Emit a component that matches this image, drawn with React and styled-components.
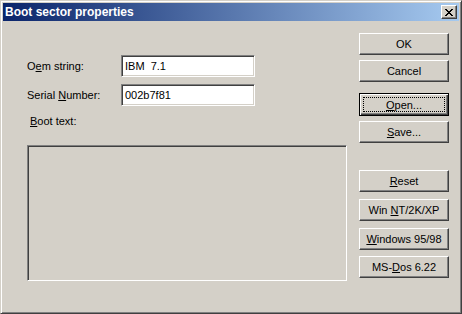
import React from "react";
import styled, { createGlobalStyle } from "styled-components";

const Global = createGlobalStyle`
  html, body { margin: 0; padding: 0; background: #D4D0C8; }
  body { font-family: "Liberation Sans", Arial, sans-serif; font-size: 11px; color: #000; }
  * { box-sizing: border-box; }
`;

const Window = styled.div`
  width: 462px;
  height: 314px;
  background: #D4D0C8;
  border: 1px solid;
  border-color: #D4D0C8 #404040 #404040 #D4D0C8;
  box-shadow: inset 1px 1px #fff, inset -1px -1px #808080;
  padding: 2px;
  display: flex;
  flex-direction: column;
`;

const TitleBar = styled.div`
  height: 18px;
  flex: none;
  background: linear-gradient(to right, #0A246A, #A6CAF0);
  display: flex;
  align-items: center;
  justify-content: space-between;
  padding: 0 2px 0 2px;
`;

const Title = styled.span`
  color: #fff;
  font-weight: bold;
  font-size: 12px;
`;

const CloseBtn = styled.div`
  width: 16px;
  height: 14px;
  background: #D4D0C8;
  border: 1px solid;
  border-color: #fff #404040 #404040 #fff;
  box-shadow: inset -1px -1px #808080;
  display: flex;
  align-items: center;
  justify-content: center;
  padding-right: 1px;
`;

const Body = styled.div`
  flex: 1;
  display: flex;
  padding: 1px 0 0 1px;
`;

const LeftCol = styled.div`
  width: 355px;
  display: flex;
  flex-direction: column;
  padding-top: 33px;
`;

const Row = styled.div`
  display: flex;
  align-items: center;
  height: 22px;
  margin-bottom: ${(p) => p.$gap || 0}px;
  padding-left: 23px;
`;

const Label = styled.span`
  width: 94px;
  white-space: pre;
`;

const U = styled.span`
  text-decoration: underline;
`;

const Input = styled.div`
  width: 134px;
  height: 22px;
  background: #fff;
  border: 1px solid;
  border-color: #808080 #fff #fff #808080;
  box-shadow: inset 1px 1px #404040, inset -1px -1px #D4D0C8;
  padding: 0 3px;
  display: flex;
  align-items: center;
  white-space: pre;
`;

const BootLabel = styled.div`
  padding-left: 26px;
  margin-top: 7px;
  height: 16px;
  line-height: 16px;
`;

const Frame = styled.div`
  margin-left: 23px;
  margin-top: 16px;
  width: 320px;
  height: 136px;
  border: 1px solid;
  border-color: #808080 #fff #fff #808080;
  box-shadow: inset 1px 1px #404040;
`;

const RightCol = styled.div`
  display: flex;
  flex-direction: column;
  padding-top: 11px;
`;

const Btn = styled.div`
  width: 90px;
  height: ${(p) => (p.$default ? 23 : 22)}px;
  margin-top: ${(p) => p.$mt || 0}px;
  border: 1px solid;
  border-color: ${(p) => (p.$default ? "#000" : "#fff #404040 #404040 #fff")};
  box-shadow: ${(p) =>
    p.$default
      ? "inset 1px 1px #fff, inset -1px -1px #404040, inset -2px -2px #808080"
      : "inset -1px -1px #808080"};
  display: flex;
  align-items: center;
  justify-content: center;
  white-space: pre;
  position: relative;
`;

const Focus = styled.div`
  position: absolute;
  inset: 3px;
  border: 1px dotted #000;
`;

export default function App() {
  return (
    <>
      <Global />
      <Window>
        <TitleBar>
          <Title>Boot sector properties</Title>
          <CloseBtn>
            <svg width="8" height="7" viewBox="0 0 8 7" shapeRendering="crispEdges">
              <path
                d="M0 0h2v1h-2zM6 0h2v1h-2zM1 1h2v1h-2zM5 1h2v1h-2zM2 2h4v1h-4zM3 3h2v1h-2zM2 4h4v1h-4zM1 5h2v1h-2zM5 5h2v1h-2zM0 6h2v1h-2zM6 6h2v1h-2z"
                fill="#000"
              />
            </svg>
          </CloseBtn>
        </TitleBar>
        <Body>
          <LeftCol>
            <Row $gap={7}>
              <Label>
                O<U>e</U>m string:
              </Label>
              <Input>IBM  7.1</Input>
            </Row>
            <Row>
              <Label>
                Serial <U>N</U>umber:
              </Label>
              <Input>002b7f81</Input>
            </Row>
            <BootLabel>
              <U>B</U>oot text:
            </BootLabel>
            <Frame />
          </LeftCol>
          <RightCol>
            <Btn>OK</Btn>
            <Btn $mt={5}>Cancel</Btn>
            <Btn $mt={11} $default>
              <U>O</U>pen...
              <Focus />
            </Btn>
            <Btn $mt={5}>
              <U>S</U>ave...
            </Btn>
            <Btn $mt={27}>
              <U>R</U>eset
            </Btn>
            <Btn $mt={7}>
              Win <U>N</U>T/2K/XP
            </Btn>
            <Btn $mt={7}>
              <U>W</U>indows 95/98
            </Btn>
            <Btn $mt={6}>
              MS-<U>D</U>os 6.22
            </Btn>
          </RightCol>
        </Body>
      </Window>
    </>
  );
}
